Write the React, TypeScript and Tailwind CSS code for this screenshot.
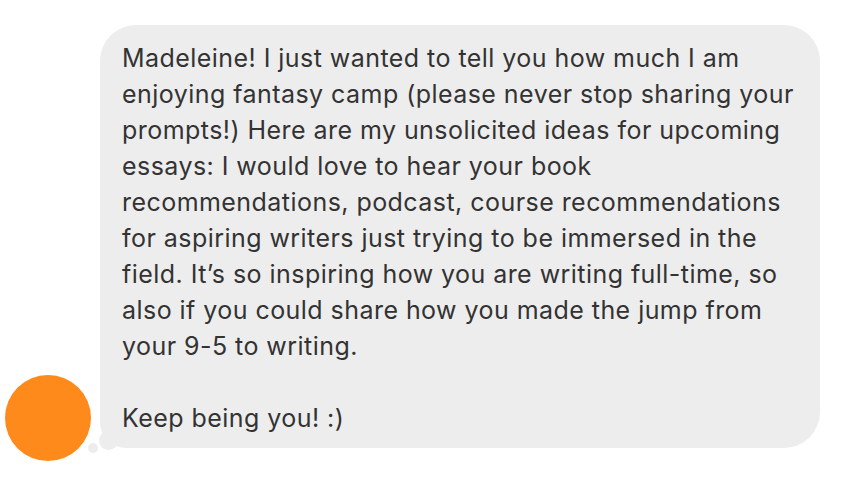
const lines = [
  "Madeleine! I just wanted to tell you how much I am",
  "enjoying fantasy camp (please never stop sharing your",
  "prompts!) Here are my unsolicited ideas for upcoming",
  "essays: I would love to hear your book",
  "recommendations, podcast, course recommendations",
  "for aspiring writers just trying to be immersed in the",
  "field. It’s so inspiring how you are writing full-time, so",
  "also if you could share how you made the jump from",
  "your 9-5 to writing.",
];

export default function App() {
  return (
    <div className="w-[862px] h-[486px] bg-white relative overflow-hidden" style={{ fontFamily: 'Inter, "Noto Sans", sans-serif' }}>
      <div className="absolute left-[99px] top-[431px] w-[19px] h-[19px] rounded-full bg-[#ededed]" />
      <div className="absolute left-[100px] top-[25px] w-[720px] h-[423px] bg-[#ededed] rounded-[36px] rounded-bl-[26px] pl-[22px] pt-[15px] text-[25px] leading-[36px] text-[#333333] tracking-[0.45px]">
        {lines.map((l, i) => (
          <div key={i} className="whitespace-nowrap">{l}</div>
        ))}
        <div className="h-[36px]" />
        <div className="whitespace-nowrap">Keep being you! :)</div>
      </div>
      <div className="absolute left-[88px] top-[443px] w-[10px] h-[10px] rounded-full bg-[#ededed]" />
      <div className="absolute left-[5px] top-[375px] w-[86px] h-[86px] rounded-full bg-[#ff8a1c]" />
    </div>
  );
}
